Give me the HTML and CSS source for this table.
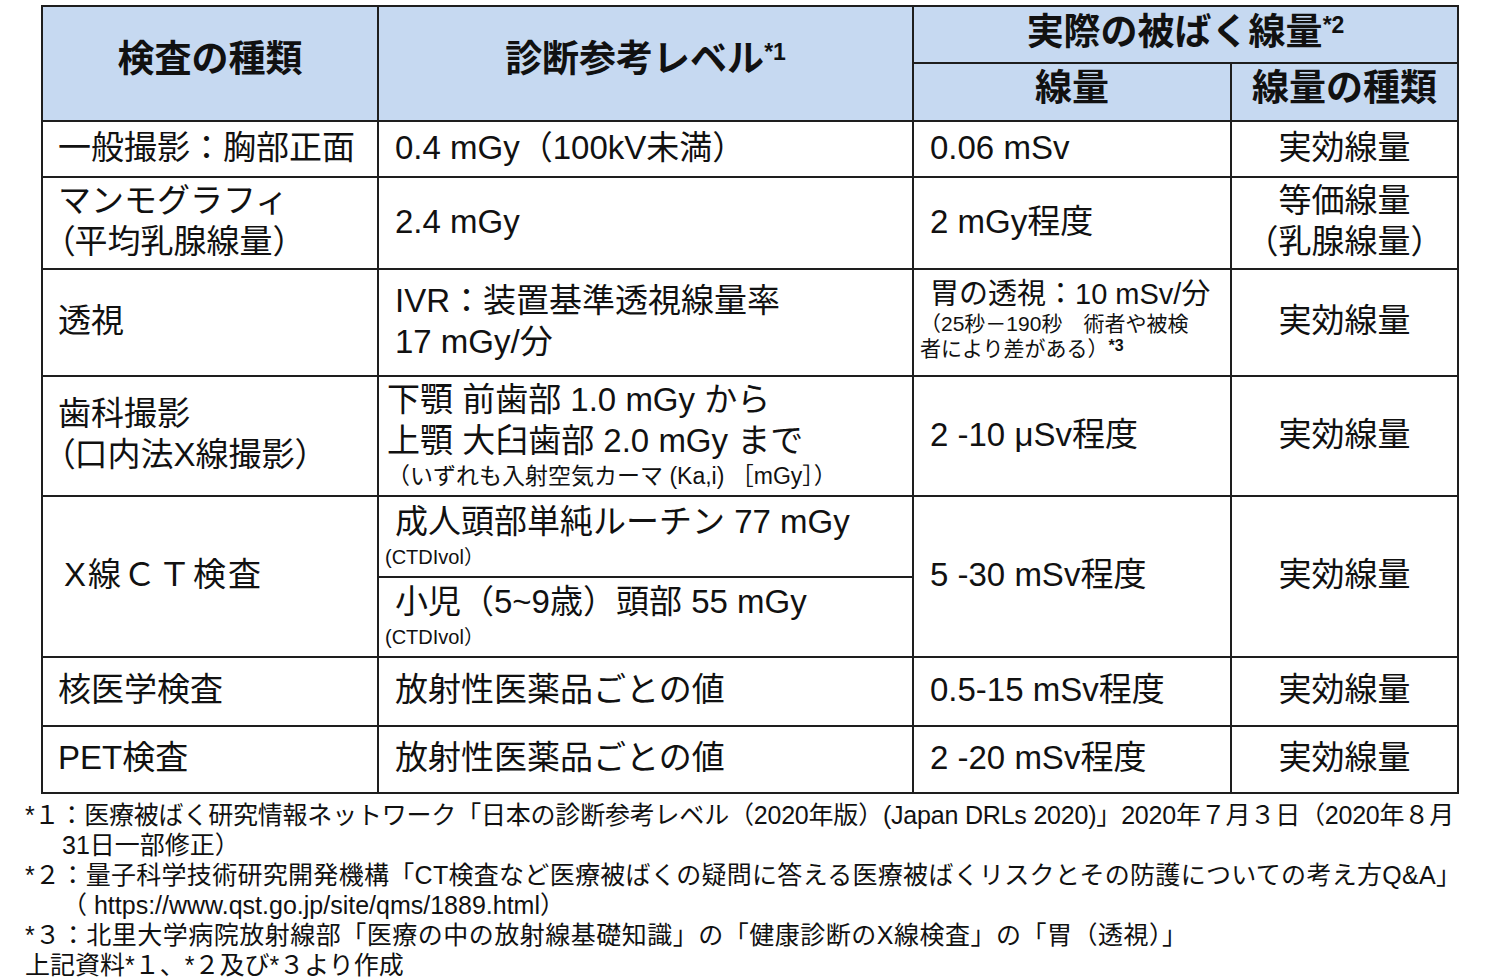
FILE: index.html
```html
<!DOCTYPE html>
<html lang="ja">
<head>
<meta charset="utf-8">
<title>医療被ばく 線量表</title>
<link rel="stylesheet" href="styles.css">
</head>
<body>
<div class="page">
  <table class="dose">
    <colgroup>
      <col class="c1"><col class="c2"><col class="c3"><col class="c4">
    </colgroup>
    <thead>
      <tr class="h1">
        <th rowspan="2">検査の種類</th>
        <th rowspan="2">診断参考レベル<sup>*1</sup></th>
        <th colspan="2" class="top">実際の被ばく線量<sup>*2</sup></th>
      </tr>
      <tr class="h2">
        <th>線量</th>
        <th>線量の種類</th>
      </tr>
    </thead>
    <tbody>
      <tr class="r1">
        <td class="k">一般撮影：胸部正面</td>
        <td>0.4 mGy（100kV未満）</td>
        <td>0.06 mSv</td>
        <td class="ctr">実効線量</td>
      </tr>
      <tr class="r2">
        <td class="k">マンモグラフィ<br><span class="pp">（</span>平均乳腺線量）</td>
        <td>2.4 mGy</td>
        <td>2 mGy程度</td>
        <td class="ctr">等価線量<br>（乳腺線量）</td>
      </tr>
      <tr class="r3">
        <td class="k">透視</td>
        <td>IVR：装置基準透視線量率<br>17 mGy/分</td>
        <td class="tight">
          <div class="lead">胃の透視：10 mSv/分</div>
          <div class="small">（25秒－190秒　術者や被検<br>者により差がある）<sup class="s3">*3</sup></div>
        </td>
        <td class="ctr">実効線量</td>
      </tr>
      <tr class="r4">
        <td class="k">歯科撮影<br><span class="pp">（</span>口内法X線撮影）</td>
        <td class="narrow">
          <div>下顎 前歯部 1.0 mGy から</div>
          <div>上顎 大臼歯部 2.0 mGy まで</div>
          <div class="small2">（いずれも入射空気カーマ (Ka,i) ［mGy］）</div>
        </td>
        <td>2 -10 μSv程度</td>
        <td class="ctr">実効線量</td>
      </tr>
      <tr class="r5a">
        <td rowspan="2" class="k ct">X線ＣＴ検査</td>
        <td class="narrow">
          <div class="ind">成人頭部単純ルーチン 77 mGy</div>
          <div class="ctd">(CTDIvol）</div>
        </td>
        <td rowspan="2">5 -30 mSv程度</td>
        <td rowspan="2" class="ctr">実効線量</td>
      </tr>
      <tr class="r5b">
        <td class="narrow">
          <div class="ind">小児（5~9歳）頭部 55 mGy</div>
          <div class="ctd">(CTDIvol）</div>
        </td>
      </tr>
      <tr class="r6">
        <td class="k">核医学検査</td>
        <td>放射性医薬品ごとの値</td>
        <td>0.5-15 mSv程度</td>
        <td class="ctr">実効線量</td>
      </tr>
      <tr class="r7">
        <td class="k">PET検査</td>
        <td>放射性医薬品ごとの値</td>
        <td>2 -20 mSv程度</td>
        <td class="ctr">実効線量</td>
      </tr>
    </tbody>
  </table>

  <div class="notes">
    <p class="n1">*１：医療被ばく研究情報ネットワーク「日本の診断参考レベル（2020年版）(Japan DRLs 2020)」2020年７月３日（2020年８月</p>
    <p class="cont">31日一部修正）</p>
    <p class="n2">*２：量子科学技術研究開発機構「CT検査など医療被ばくの疑問に答える医療被ばくリスクとその防護についての考え方Q&amp;A」</p>
    <p class="cont">（ https://www.qst.go.jp/site/qms/1889.html）</p>
    <p class="n3">*３：北里大学病院放射線部「医療の中の放射線基礎知識」の「健康診断のX線検査」の「胃（透視）」</p>
    <p>上記資料*１、*２及び*３より作成</p>
  </div>
</div>
</body>
</html>
```

FILE: styles.css
```css
html, body {
  margin: 0;
  padding: 0;
  background: #ffffff;
}

body {
  font-family: "Liberation Sans", "Noto Sans CJK JP", sans-serif;
  color: #111111;
}

.page {
  box-sizing: border-box;
  padding: 5px 0 0 0;
  width: 1500px;
  min-height: 979px;
  border-bottom: 1px solid #ececec;
}

.dose {
  margin-left: 41px;
  width: 1416px;
  table-layout: fixed;
  border-collapse: collapse;
  font-size: 33px;
  line-height: 41px;
}

.c1 { width: 336px; }
.c2 { width: 535px; }
.c3 { width: 318px; }
.c4 { width: 227px; }

.dose th,
.dose td {
  border: 2px solid #1e1e1e;
  padding: 0 16px 4px 16px;
  vertical-align: middle;
  text-align: left;
}

.dose td.k { padding-left: 15px; }

.dose th {
  background: #c6d9f1;
  font-size: 37px;
  font-weight: bold;
  text-align: center;
  padding: 0 0 8px 0;
  line-height: 44px;
}

.dose th.top { padding-bottom: 4px; }
.h2 th { padding-bottom: 6px; }

.dose th sup {
  font-size: 23px;
  font-weight: bold;
  vertical-align: 12px;
  line-height: 0;
}

.h1 { height: 57px; }
.h2 { height: 58px; }
.r1 { height: 56px; }
.r2 { height: 92px; }
.r3 { height: 107px; }
.r4 { height: 120px; }
.r5a { height: 81px; }
.r5b { height: 80px; }
.r6 { height: 69px; }
.r7 { height: 67px; }

.pp { font-feature-settings: "palt"; }

.dose td.ct { letter-spacing: 2px; padding-left: 21px; }

.dose td.ctr { text-align: center; padding: 0 0 4px 0; }

.dose td.tight { padding: 0 6px 2px 6px; }

.lead {
  font-size: 29px;
  line-height: 34px;
  padding-left: 10px;
}

.small {
  font-size: 21px;
  line-height: 25px;
  padding-bottom: 6px;
}

.s3 {
  font-size: 16px;
  font-weight: bold;
  vertical-align: 5px;
  line-height: 0;
}

.dose td.narrow { padding: 0 8px 2px 8px; }

.small2 {
  font-size: 23px;
  line-height: 30px;
}

.ind { padding-left: 8px; line-height: 42px; }

.ctd {
  font-size: 20px;
  line-height: 28px;
  margin-left: -2px;
}

.notes {
  margin-top: 6px;
  padding-left: 25px;
  font-size: 25px;
  line-height: 30px;
}

.notes p {
  margin: 0;
  white-space: nowrap;
}

.notes p.n1 { letter-spacing: -0.2px; }
.notes p.n2 { letter-spacing: 0.3px; }
.notes p.n3 { letter-spacing: 0.5px; }

.notes p.cont { padding-left: 37px; }
```
